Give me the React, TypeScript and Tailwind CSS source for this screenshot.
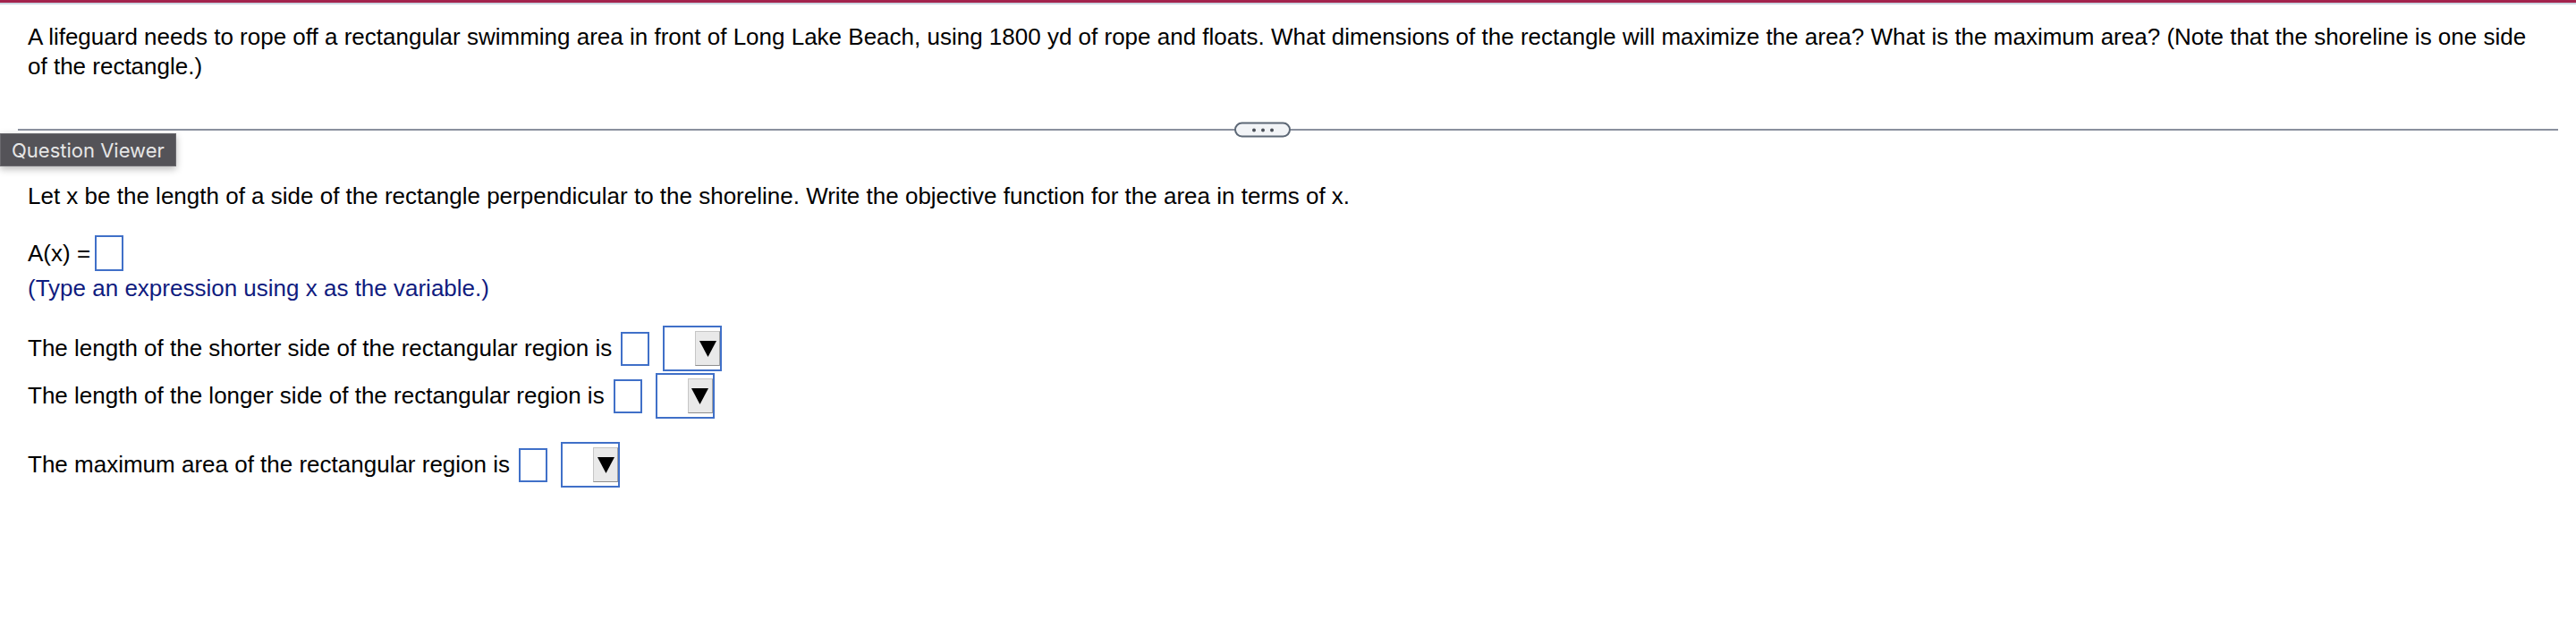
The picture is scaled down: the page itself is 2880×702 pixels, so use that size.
import React from "react";

function AnswerBox() {
  return <span className="ml-[10px] inline-block h-[38px] w-[32px] shrink-0 border-2 border-[#4070c8] bg-white" />;
}

function UnitSelect() {
  return (
    <span className="ml-[15px] flex h-[51px] w-[66px] shrink-0 items-center justify-end border-2 border-[#4070c8] bg-white">
      <span className="flex h-[39px] w-[28px] items-center justify-center border border-[#c6c6c6] border-r-[#a2a2a2] border-b-[#8e8e8e] bg-[#e9e9e9]">
        <svg width="19" height="18" viewBox="0 0 19 18" aria-hidden="true">
          <polygon points="0,0 19,0 9.5,18" fill="#000" />
        </svg>
      </span>
    </span>
  );
}

function AnswerRow({ label }: { label: string }) {
  return (
    <div className="flex items-center">
      <span>{label}</span>
      <AnswerBox />
      <UnitSelect />
    </div>
  );
}

export default function App() {
  return (
    <div className="min-h-screen bg-white font-['Liberation_Sans',Arial,sans-serif] text-[26px] leading-[33px] text-black">
      <div className="h-[3px] bg-[#a3234d]" />
      <div className="h-[2px] bg-[#ccd6e1]" />

      <p className="pl-[31px] pr-[40px] pt-[20px]">
        A lifeguard needs to rope off a rectangular swimming area in front of Long Lake Beach, using 1800 yd of rope
        and floats. What dimensions of the rectangle will maximize the area? What is the maximum area? (Note that the
        shoreline is one side of the rectangle.)
      </p>

      <div className="relative mx-[20px] mt-[53px] h-[2px] bg-[#8a909e]">
        <button
          type="button"
          className="absolute left-[1360px] top-1/2 flex h-[17px] w-[63px] -translate-y-1/2 items-center justify-center gap-[6px] rounded-full border-2 border-[#5d6876] bg-[#f2f4f7]"
          aria-label="Show more"
        >
          <span className="h-[4px] w-[4px] rounded-full bg-[#4b5058]" />
          <span className="h-[4px] w-[4px] rounded-full bg-[#4b5058]" />
          <span className="h-[4px] w-[4px] rounded-full bg-[#4b5058]" />
        </button>
      </div>

      <div className="mt-[3px] flex h-[37px] w-[197px] items-center border border-[#6a696e] bg-[#545358] px-[12px] font-['Inter',sans-serif] text-[22px] leading-none text-[#e6e6e6] shadow-[0_3px_8px_rgba(0,0,0,0.28)]">
        Question Viewer
      </div>

      <div className="pl-[31px] pr-[40px]">
        <p className="mt-[17px]">
          Let x be the length of a side of the rectangle perpendicular to the shoreline. Write the objective function
          for the area in terms of x.
        </p>

        <div className="mt-[27px] flex h-[40px] items-center">
          <span>A(x) =</span>
          <span className="ml-[5px] inline-block h-[40px] w-[32px] border-2 border-[#4070c8] bg-white" />
        </div>
        <p className="mt-[3px] text-[#101c80]">(Type an expression using x as the variable.)</p>

        <div className="mt-[25px] flex flex-col gap-[2px]">
          <AnswerRow label="The length of the shorter side of the rectangular region is" />
          <AnswerRow label="The length of the longer side of the rectangular region is" />
        </div>

        <div className="mt-[26px]">
          <AnswerRow label="The maximum area of the rectangular region is" />
        </div>
      </div>
    </div>
  );
}
